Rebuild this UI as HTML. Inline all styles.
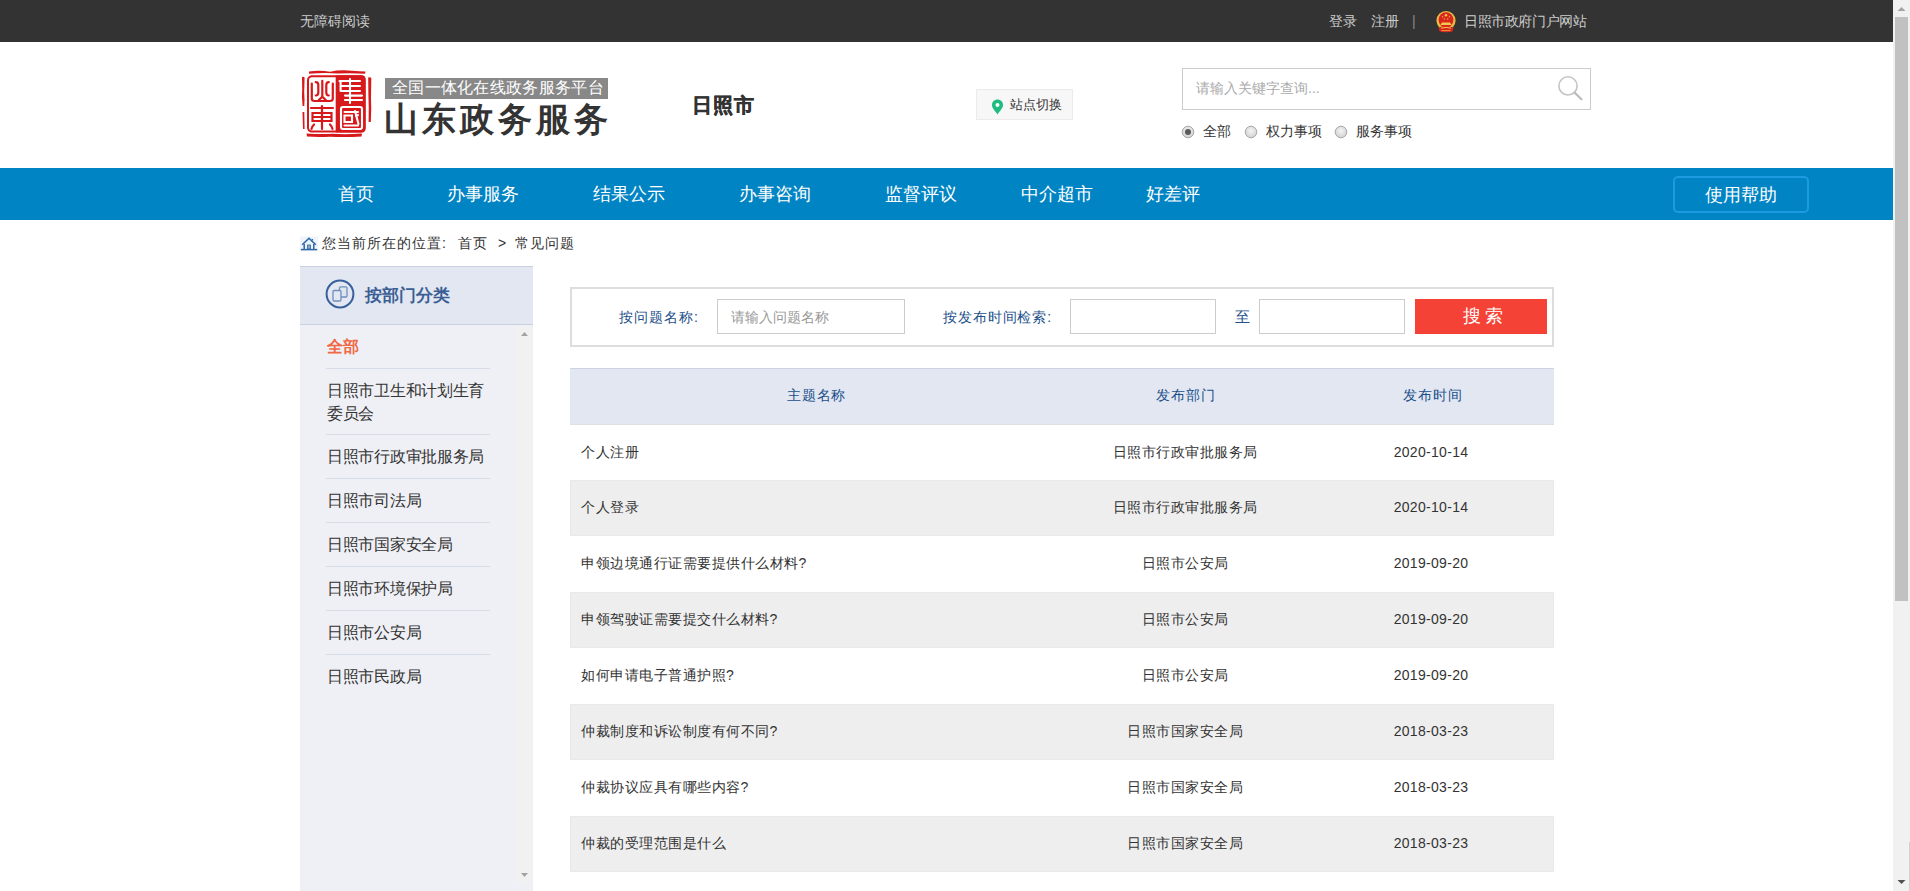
<!DOCTYPE html>
<html><head><meta charset="utf-8">
<style>
*{margin:0;padding:0;box-sizing:border-box}
html,body{width:1910px;height:891px;overflow:hidden;background:#fff}
body{font-family:"Liberation Sans",sans-serif;color:#333;position:relative}
.abs{position:absolute;white-space:nowrap}
#topbar{position:absolute;left:0;top:0;width:1893px;height:42px;background:#333}
#topbar .t{position:absolute;top:12px;font-size:14px;line-height:18px;color:#ccc}
#vscroll{position:absolute;left:1893px;top:0;width:17px;height:891px;background:#f1f1f1}
#vthumb{position:absolute;left:2px;top:17px;width:13px;height:584px;background:#c1c1c1}
#nav{position:absolute;left:0;top:168px;width:1893px;height:52px;background:#0084c4}
#nav .n{position:absolute;top:15px;font-size:18px;line-height:22px;color:#fff}
#help{position:absolute;left:1673px;top:176px;width:136px;height:37px;border:2px solid #1d9ae0;border-radius:5px;color:#fff;font-size:18px;line-height:34px;text-align:center}
.crumb{position:absolute;top:234px;font-size:14px;line-height:18px;color:#333;letter-spacing:1px}
#side{position:absolute;left:300px;top:266px;width:233px;height:625px;background:#eff0f5}
#sidehead{position:absolute;left:0;top:0;width:233px;height:59px;background:#e3e7f1;border-top:1px solid #c8d0e1;border-bottom:1px solid #c8d0e1}
#sidetrack{position:absolute;left:216px;top:59px;width:17px;height:559px;background:#f1f1f1}
.si{position:absolute;left:27px;font-size:16px;line-height:22px;color:#333;letter-spacing:-0.3px}
.sline{position:absolute;left:26px;width:164px;height:1px;background:#d6dce8}
#sbox{position:absolute;left:570px;top:287px;width:984px;height:60px;border:2px solid #ddd}
.inp{position:absolute;border:1px solid #ccc;background:#fff}
#tbl{position:absolute;left:570px;top:368px;width:984px}
.row{position:relative;height:56px;font-size:14px;color:#333}
.row.alt{background:#eeeeee;box-shadow:inset 0 0 0 1px #e9e9e9}
.row.hd{background:#e3e7f1;border-top:1px solid #ccd3e3;border-bottom:1px solid #dfe0e4;height:57px;color:#20508c}
.row.r1{height:55px}
.row.r1 span{top:18px}
.row span{position:absolute;top:18px;line-height:18px;white-space:nowrap;letter-spacing:0.5px}
.row.hd span{top:17px;letter-spacing:0.8px}
.c1{left:11px}
.c2{left:615px;width:0;display:flex;justify-content:center}
.c3{left:861px;width:0;display:flex;justify-content:center}
.row span.c3{letter-spacing:0.3px}
.row.hd span.c3{left:863px;letter-spacing:1px}
.row.hd span.c2{left:616px}
</style></head><body>
<div id="topbar">
  <div class="t" style="left:300px">无障碍阅读</div>
  <div class="t" style="left:1329px">登录</div>
  <div class="t" style="left:1371px">注册</div>
  <div class="t" style="left:1412px;color:#888">|</div>
  <svg style="position:absolute;left:1435px;top:10px" width="22" height="23" viewBox="0 0 22 23">
<circle cx="11" cy="10.6" r="9.6" fill="#e9b845"/>
<ellipse cx="11" cy="9.8" rx="7.4" ry="7.6" fill="#d9261c"/>
<circle cx="11" cy="5.2" r="1.3" fill="#f2c94c"/><circle cx="7.6" cy="6.8" r="0.8" fill="#e8a33c"/><circle cx="14.4" cy="6.8" r="0.8" fill="#e8a33c"/><circle cx="9.4" cy="9" r="0.8" fill="#e8a33c"/><circle cx="12.6" cy="9" r="0.8" fill="#e8a33c"/>
<path d="M5.5 15 L7 12.6 L15 12.6 L16.5 15 Z" fill="#f0c850"/>
<path d="M3.5 17.5 Q11 14.5 18.5 17.5 L17.5 21.5 Q11 23 4.5 21.5 Z" fill="#d9261c"/>
<path d="M6 18.2 Q11 16.5 16 18.2" stroke="#f0c850" stroke-width="1" fill="none"/>
<path d="M6.5 20.6 L15.5 20.6" stroke="#e8a33c" stroke-width="0.9"/>
</svg>
  <div class="t" style="left:1464px;letter-spacing:-0.4px">日照市政府门户网站</div>
</div>
<div id="vscroll"><div id="vthumb"></div><div style="position:absolute;left:16px;top:842px;width:1px;height:49px;background:#d0d0d0"></div>
<svg style="position:absolute;left:4px;top:6px" width="9" height="6" viewBox="0 0 9 6"><path d="M0.5 5 L4.5 1 L8.5 5 Z" fill="#a3a3a3"/></svg>
<svg style="position:absolute;left:4px;top:879px" width="9" height="6" viewBox="0 0 9 6"><path d="M0.5 1 L4.5 5 L8.5 1 Z" fill="#505050"/></svg>
</div>

<!-- header -->
<svg style="position:absolute;left:300px;top:67px" width="74" height="74" viewBox="0 0 74 74">
<g fill="#d7191c">
<path d="M9 4.5 Q20 3 30 4.8 Q40 2.5 52 3.8 Q60 4.2 65.5 4.5 L65 6.8 Q50 5.6 38 6.6 Q25 5.4 9 6.8 Z"/>
<path d="M2 10 Q3.6 9.5 4.6 10.5 L4.2 25 Q4.8 33 4.3 39 L2.6 39 Q1.5 30 2.2 22 Z"/>
<path d="M2.5 45 L4.3 45 L4.6 62 L3 62 Z"/>
<path d="M68.2 10.5 Q70.5 10 71.3 11 L71 30 Q71.6 42 70.8 55 L68.6 55 Q69 40 68.4 28 Z"/>
<path d="M6.5 66.5 Q20 67.5 33 66.8 Q45 67.8 62 66.5 L61.5 69.5 Q45 70.5 30 69.7 Q18 70.5 7 69.6 Z"/>
<path d="M35.7 8.3 L61.5 8.3 Q65.6 8.3 65.6 12.3 L65.6 61.6 Q65.6 65.6 61.5 65.6 L35.7 65.6 Z"/>
</g>
<rect x="8" y="9.3" width="56.6" height="55.3" rx="4" fill="none" stroke="#d7191c" stroke-width="2"/>
<g fill="none" stroke="#d7191c" stroke-width="2.2" stroke-linecap="round">
<path d="M11.8 16.5 L11.8 31.5 Q11.8 34 14.5 34 L30 34 Q32.8 34 32.8 31.5 L32.8 16.5"/>
<path d="M15.8 15.2 Q18.3 15.2 18.3 18 L18.3 25.5 Q18.3 28.5 15.8 28.5"/>
<path d="M28.8 15.2 Q26.3 15.2 26.3 18 L26.3 25.5 Q26.3 28.5 28.8 28.5"/>
<path d="M22.3 13.8 L22.3 29.5 M18.8 33 L22.3 29.8 L25.8 33"/>
<path d="M11 41 L33 41 M22 39 L22 62 M12.5 46 L31.5 46 L31.5 54 L12.5 54 Z M12.5 50 L31.5 50 M14 57.5 Q11.5 60 11.5 62 M30 57.5 Q32.5 60 32.5 62"/>
</g>
<g fill="none" stroke="#fff" stroke-width="2.1" stroke-linecap="round">
<path d="M39.5 14 L60 14 M40.6 14 L40.6 24 M40.6 19 L60 19 M40.6 24 L60 24 M50 12 L50 36 M45 28.6 L62 28.6 M45 33 L62 33"/>
<path d="M41 42 Q41 40 43 40 L60 40 Q62 40 62 42 L62 60 Q62 62 60 62 L43 62 Q41 62 41 60 Z M44.5 45 L58 45 M44.5 48.5 L52 48.5 L52 55 L44.5 55 Z M44.5 58.5 L58 58.5 M55 44 L58.5 57 M56 49 L58 48"/>
</g>
</svg>
<div class="abs" style="left:385px;top:78px;width:223px;height:21px;background:#888;color:#fff;font-size:16px;line-height:20px;padding-left:7px;letter-spacing:0.3px">全国一体化在线政务服务平台</div>
<div class="abs" style="left:384px;top:99px;font-size:34px;line-height:40px;font-weight:bold;color:#333;letter-spacing:4px">山东政务服务</div>
<div class="abs" style="left:692px;top:92px;font-size:20px;line-height:26px;font-weight:900;color:#333;letter-spacing:1px;-webkit-text-stroke:0.5px #333">日照市</div>
<div class="abs" style="left:976px;top:89px;width:97px;height:31px;background:#f7f7f7;border:1px solid #ebebeb"></div>
<svg style="position:absolute;left:991px;top:99px" width="13" height="16" viewBox="0 0 13 16"><path d="M6.5 0.6 C3.3 0.6 1 3 1 6 C1 9.3 4.5 12.2 6.5 15.4 C8.5 12.2 12 9.3 12 6 C12 3 9.7 0.6 6.5 0.6 Z" fill="#1dbd7f"/><circle cx="6.5" cy="6" r="2" fill="#fff"/></svg>
<div class="abs" style="left:1010px;top:97px;font-size:13px;line-height:16px;color:#333">站点切换</div>
<div class="abs" style="left:1182px;top:68px;width:409px;height:42px;border:1px solid #ccc"></div>
<svg style="position:absolute;left:1555px;top:73px" width="30" height="30" viewBox="0 0 30 30"><circle cx="13" cy="12.9" r="9.1" fill="none" stroke="#c4c4c4" stroke-width="1.6"/><path d="M19.6 19.6 L26.5 26.3" stroke="#bdbdbd" stroke-width="2.2" stroke-linecap="round"/></svg>
<div class="abs" style="left:1196px;top:79px;font-size:14px;line-height:18px;color:#aaa">请输入关键字查询...</div>
<svg style="position:absolute;left:1181px;top:125px" width="14" height="14" viewBox="0 0 14 14"><defs><radialGradient id="rg" cx="50%" cy="40%" r="60%"><stop offset="0" stop-color="#f5f5f5"/><stop offset="1" stop-color="#cfcfcf"/></radialGradient></defs><circle cx="7" cy="7" r="5.8" fill="url(#rg)" stroke="#a9a9a9" stroke-width="1"/><circle cx="7" cy="7" r="3" fill="#5a5a5a"/></svg><svg style="position:absolute;left:1244px;top:125px" width="14" height="14" viewBox="0 0 14 14"><circle cx="7" cy="7" r="5.8" fill="url(#rg)" stroke="#a9a9a9" stroke-width="1"/></svg><svg style="position:absolute;left:1334px;top:125px" width="14" height="14" viewBox="0 0 14 14"><circle cx="7" cy="7" r="5.8" fill="url(#rg)" stroke="#a9a9a9" stroke-width="1"/></svg>
<div class="abs" style="left:1203px;top:122px;font-size:14px;line-height:18px;color:#333">全部</div>
<div class="abs" style="left:1266px;top:122px;font-size:14px;line-height:18px;color:#333">权力事项</div>
<div class="abs" style="left:1356px;top:122px;font-size:14px;line-height:18px;color:#333">服务事项</div>

<div id="nav">
  <div class="n" style="left:338px">首页</div>
  <div class="n" style="left:447px">办事服务</div>
  <div class="n" style="left:593px">结果公示</div>
  <div class="n" style="left:739px">办事咨询</div>
  <div class="n" style="left:885px">监督评议</div>
  <div class="n" style="left:1021px">中介超市</div>
  <div class="n" style="left:1146px">好差评</div>
</div>
<div id="help">使用帮助</div>

<svg style="position:absolute;left:300px;top:236px" width="18" height="15" viewBox="0 0 18 15"><rect x="0" y="0.5" width="18" height="14" fill="#eef4f9"/><path d="M2.2 8.8 L9 2.2 L15.8 8.8" fill="none" stroke="#2e68a6" stroke-width="1.6" stroke-linejoin="round"/><path d="M12.4 4.5 L12.4 3" stroke="#2e68a6" stroke-width="1.4"/><path d="M4.2 8 L4.2 13 M13.8 8 L13.8 13" stroke="#2e68a6" stroke-width="1.5"/><rect x="7.5" y="9" width="3" height="4" fill="#8aaad0" stroke="#2e68a6" stroke-width="0.8"/><path d="M0.8 13.6 L17.2 13.6" stroke="#2e68a6" stroke-width="1.5"/></svg>
<div class="crumb" style="left:322px">您当前所在的位置:</div>
<div class="crumb" style="left:458px">首页</div>
<div class="crumb" style="left:498px">&gt;</div>
<div class="crumb" style="left:515px">常见问题</div>

<div id="side">
  <div id="sidehead"></div>
  <svg style="position:absolute;left:25px;top:13px" width="30" height="30" viewBox="0 0 30 30"><circle cx="15" cy="15" r="13.4" fill="none" stroke="#365f9c" stroke-width="2"/><rect x="14.5" y="7.8" width="7.5" height="10.2" rx="1.2" fill="#dfe5ef" stroke="#6e8fbd" stroke-width="1.3"/><rect x="8" y="11.5" width="8" height="10.5" rx="1.2" fill="#e3e7f1" stroke="#6e8fbd" stroke-width="1.3"/></svg>
  <div class="abs" style="left:65px;top:19px;font-size:17px;line-height:21px;font-weight:bold;color:#3b5f94">按部门分类</div>
  <div id="sidetrack"></div>
  <svg style="position:absolute;left:221px;top:65px" width="8" height="6" viewBox="0 0 8 6"><path d="M0 5 L3.5 1 L7 5 Z" fill="#a3a3a3"/></svg>
  <svg style="position:absolute;left:221px;top:606px" width="8" height="6" viewBox="0 0 8 6"><path d="M0 1 L3.5 5 L7 1 Z" fill="#a3a3a3"/></svg>
  <div class="si" style="top:70px;color:#ef6945;font-weight:bold">全部</div>
  <div class="sline" style="top:102px"></div>
  <div class="si" style="top:113px;line-height:23px">日照市卫生和计划生育<br>委员会</div>
  <div class="sline" style="top:168px"></div>
  <div class="si" style="top:180px">日照市行政审批服务局</div>
  <div class="sline" style="top:212px"></div>
  <div class="si" style="top:224px">日照市司法局</div>
  <div class="sline" style="top:256px"></div>
  <div class="si" style="top:268px">日照市国家安全局</div>
  <div class="sline" style="top:300px"></div>
  <div class="si" style="top:312px">日照市环境保护局</div>
  <div class="sline" style="top:344px"></div>
  <div class="si" style="top:356px">日照市公安局</div>
  <div class="sline" style="top:388px"></div>
  <div class="si" style="top:400px">日照市民政局</div>
</div>

<div id="sbox"></div>
<div class="abs" style="left:619px;top:308px;font-size:14px;line-height:18px;color:#24508a;letter-spacing:1px">按问题名称:</div>
<div class="inp" style="left:717px;top:299px;width:188px;height:35px"></div>
<div class="abs" style="left:731px;top:308px;font-size:14px;line-height:18px;color:#999">请输入问题名称</div>
<div class="abs" style="left:943px;top:308px;font-size:14px;line-height:18px;color:#24508a;letter-spacing:0.9px">按发布时间检索:</div>
<div class="inp" style="left:1070px;top:299px;width:146px;height:35px"></div>
<div class="abs" style="left:1235px;top:307px;font-size:15px;line-height:19px;color:#24508a">至</div>
<div class="inp" style="left:1259px;top:299px;width:146px;height:35px"></div>
<div class="abs" style="left:1415px;top:299px;width:132px;height:35px;background:#f44336;color:#fff;font-size:18px;line-height:35px;text-align:center;letter-spacing:4px;padding-left:8px">搜索</div>

<div id="tbl">
  <div class="row hd"><span class="c1" style="left:217px">主题名称</span><span class="c2">发布部门</span><span class="c3">发布时间</span></div>
  <div class="row r1"><span class="c1">个人注册</span><span class="c2">日照市行政审批服务局</span><span class="c3">2020-10-14</span></div>
  <div class="row alt"><span class="c1">个人登录</span><span class="c2">日照市行政审批服务局</span><span class="c3">2020-10-14</span></div>
  <div class="row"><span class="c1">申领边境通行证需要提供什么材料?</span><span class="c2">日照市公安局</span><span class="c3">2019-09-20</span></div>
  <div class="row alt"><span class="c1">申领驾驶证需要提交什么材料?</span><span class="c2">日照市公安局</span><span class="c3">2019-09-20</span></div>
  <div class="row"><span class="c1">如何申请电子普通护照?</span><span class="c2">日照市公安局</span><span class="c3">2019-09-20</span></div>
  <div class="row alt"><span class="c1">仲裁制度和诉讼制度有何不同?</span><span class="c2">日照市国家安全局</span><span class="c3">2018-03-23</span></div>
  <div class="row"><span class="c1">仲裁协议应具有哪些内容?</span><span class="c2">日照市国家安全局</span><span class="c3">2018-03-23</span></div>
  <div class="row alt"><span class="c1">仲裁的受理范围是什么</span><span class="c2">日照市国家安全局</span><span class="c3">2018-03-23</span></div>
</div>
</body></html>
